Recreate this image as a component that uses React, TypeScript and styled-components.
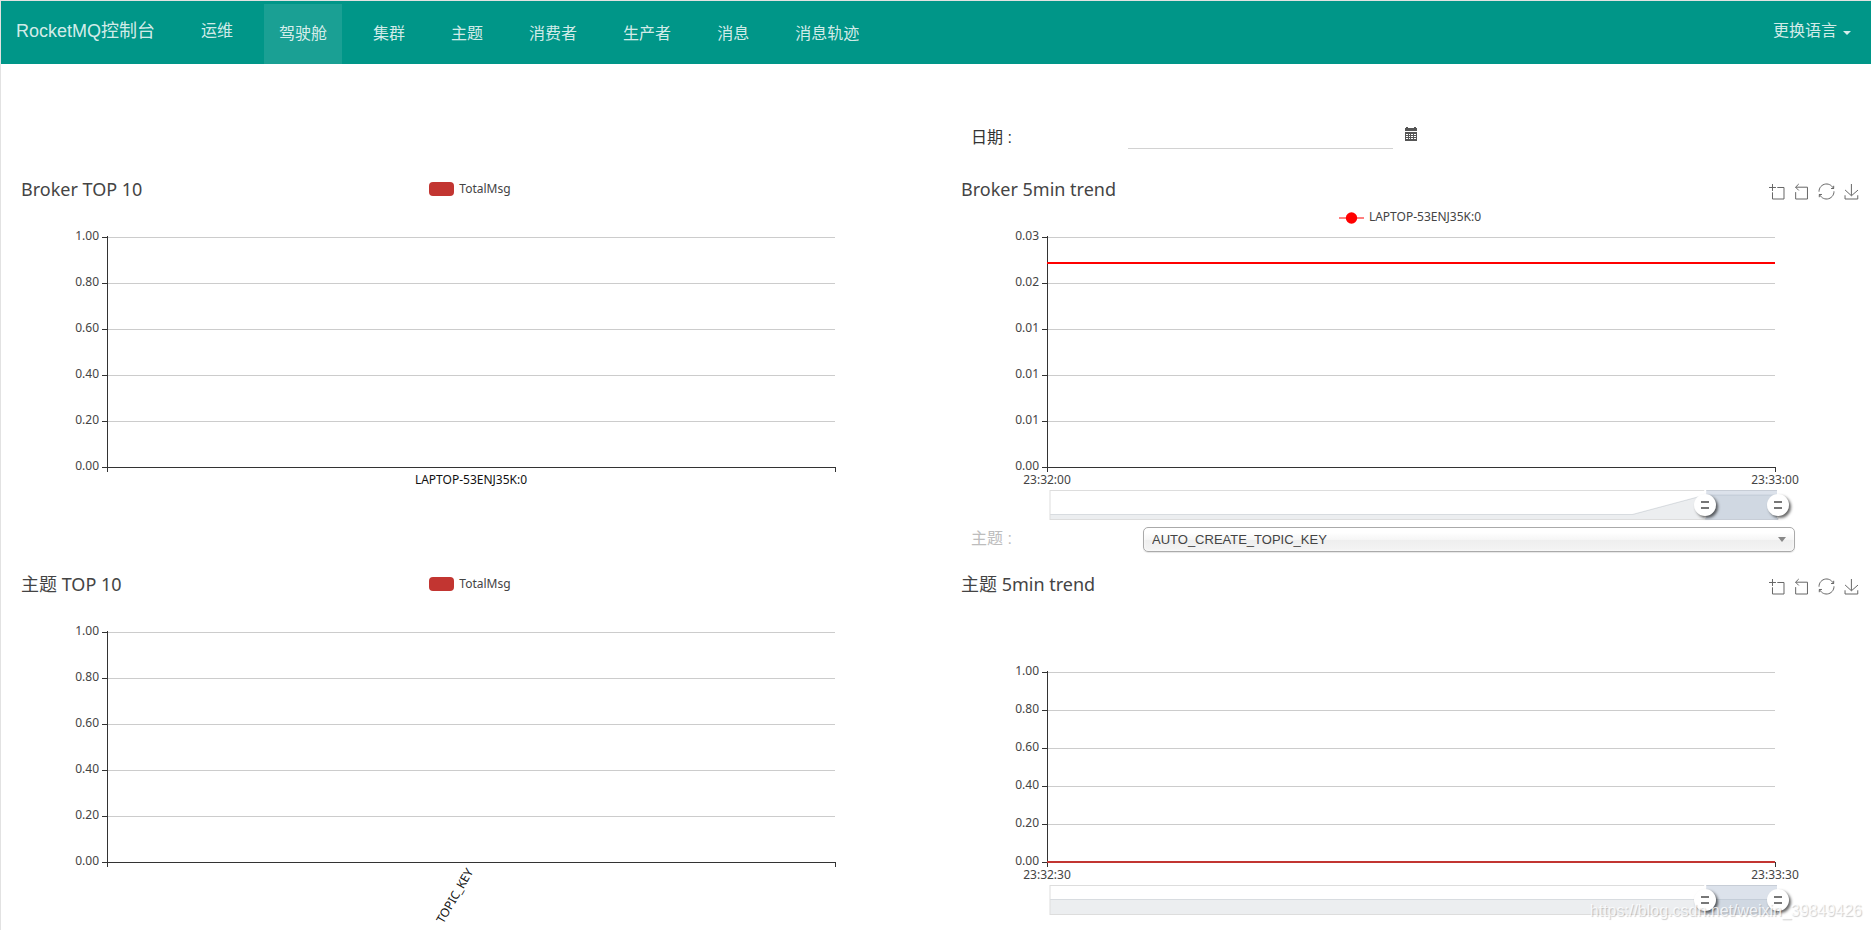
import React, { useState } from "react";
import styled, { createGlobalStyle } from "styled-components";

const UI_FONT = `"Liberation Sans", "Noto Sans CJK SC", sans-serif`;
const CHART_FONT = `"Noto Sans", "Noto Sans CJK SC", sans-serif`;

const GlobalStyle = createGlobalStyle`
  *, *::before, *::after { box-sizing: border-box; }
  body { margin: 0; background: #fff; color: #333; font-family: ${UI_FONT}; font-size: 16px; }
  button, input, select { font: inherit; }
`;

const Page = styled.div`
  position: relative;
  min-height: 100vh;
  border-top: 1px solid #e2e2e2;
  border-left: 1px solid #e2e2e2;
  overflow: hidden;
`;

/* ---------- navigation ---------- */

const Navbar = styled.nav`
  display: flex;
  align-items: flex-start;
  height: 63px;
  padding: 0 5px 0 0;
  background: #009688;
  line-height: 22px;
`;

const Brand = styled.a`
  padding: 19px 15px;
  margin-right: 16px;
  font-size: 18px;
  color: rgba(255, 255, 255, 0.84);
  text-decoration: none;
  white-space: nowrap;
`;

const OpsLink = styled.a`
  padding: 19px 15px;
  color: rgba(255, 255, 255, 0.84);
  text-decoration: none;
  white-space: nowrap;
`;

const NavList = styled.ul`
  display: flex;
  gap: 16px;
  flex: 1;
  margin: 3px 0 0 16px;
  padding: 0;
  list-style: none;
`;

const NavLink = styled.a<{ $active?: boolean }>`
  display: block;
  padding: 19px 15px;
  color: rgba(255, 255, 255, 0.84);
  background: ${(p) => (p.$active ? "rgba(255, 255, 255, 0.1)" : "transparent")};
  text-decoration: none;
  white-space: nowrap;
`;

const LanguageButton = styled.button`
  display: flex;
  align-items: center;
  gap: 6px;
  padding: 19px 15px;
  border: 0;
  background: none;
  color: rgba(255, 255, 255, 0.84);
  line-height: 22px;
  cursor: pointer;
`;

const Caret = styled.span`
  margin-top: 4px;
  border: 4px solid transparent;
  border-top-color: currentColor;
  border-bottom: 0;
`;

/* ---------- page grid ---------- */

const Dashboard = styled.main`
  padding: 0 5px 8px 15px;
`;

const Section = styled.section`
  display: grid;
  grid-template-columns: minmax(0, 1fr) minmax(0, 1fr);
  column-gap: 30px;
  align-items: end;
`;

const DateRow = styled.form`
  display: flex;
  height: 113px;
  padding: 62px 0 0 15px;
  line-height: 24px;
`;

const TopicRow = styled.form`
  display: flex;
  height: 45px;
  padding-left: 15px;
  line-height: 24px;
`;

const FieldLabel = styled.label<{ $muted?: boolean; $width: number }>`
  flex: 0 0 ${(p) => p.$width}px;
  color: ${(p) => (p.$muted ? "#bdbdbd" : "#333")};
`;

const DateInput = styled.input`
  width: 265px;
  height: 23px;
  padding: 0;
  border: 0;
  border-bottom: 1px solid #d2d2d2;
  background: none;
  outline: none;
`;

const CalendarButton = styled.button`
  display: flex;
  height: 16px;
  margin-left: 11px;
  padding: 1px 0;
  border: 0;
  background: none;
  color: #555;
  cursor: pointer;
`;

const SelectBox = styled.div`
  position: relative;
  flex: 1;
  height: 25px;
  margin-right: 71px;
`;

const TopicSelect = styled.select`
  display: block;
  width: 100%;
  height: 25px;
  padding: 0 24px 0 8px;
  border: 1px solid #aaa;
  border-radius: 5px;
  appearance: none;
  background: linear-gradient(#fff 20%, #f6f6f6 50%, #eee 52%, #f4f4f4 100%);
  box-shadow: inset 0 0 3px #fff, 0 1px 1px rgba(0, 0, 0, 0.1);
  color: #444;
  font-size: 13px;
`;

const SelectArrow = styled.span`
  position: absolute;
  top: 10px;
  right: 9px;
  border: 4px solid transparent;
  border-top: 5px solid #888;
  border-bottom: 0;
  pointer-events: none;
`;

/* ---------- charts ---------- */

const Panel = styled.article`
  height: 350px;
  font-family: ${CHART_FONT};
`;

const PanelHeader = styled.header`
  display: grid;
  grid-template-columns: 1fr auto 1fr;
  height: 50px;
  padding: 0 7px 0 5px;
`;

const Title = styled.h2`
  margin: 0;
  font-size: 18px;
  font-weight: 400;
  line-height: 24px;
  color: #444;
  white-space: nowrap;
`;

const Legend = styled.div<{ $low?: boolean }>`
  display: flex;
  align-items: center;
  align-self: start;
  gap: 5px;
  margin-top: ${(p) => (p.$low ? 32 : 4)}px;
  font-size: 12px;
  line-height: 16px;
  color: #444;
`;

const Swatch = styled.span`
  width: 25px;
  height: 14px;
  border-radius: 4px;
  background: #c23531;
`;

const Toolbox = styled.div`
  display: flex;
  justify-content: flex-end;
  gap: 10px;
  padding-top: 7px;
`;

const ToolButton = styled.button`
  display: flex;
  width: 15px;
  height: 15px;
  padding: 0;
  border: 0;
  background: none;
  cursor: pointer;
  svg { overflow: visible; }
`;

const Plot = styled.svg`
  display: block;
  width: 100%;
  overflow: visible;
  font-size: 12px;
`;

const ZoomTrack = styled.div`
  display: grid;
  width: 80%;
  height: 30px;
  margin-left: calc(10% + 3px);
  > * { grid-area: 1 / 1; }
`;

const ZoomHandle = styled.input`
  width: calc(100% + 22px);
  height: 30px;
  margin: 0 0 0 -11px;
  appearance: none;
  background: none;
  pointer-events: none;
  &::-webkit-slider-thumb {
    appearance: none;
    width: 22px;
    height: 22px;
    border-radius: 11px;
    pointer-events: auto;
    cursor: ew-resize;
    background:
      linear-gradient(#777, #777) 7px 7px / 8px 2px no-repeat,
      linear-gradient(#777, #777) 7px 13px / 8px 2px no-repeat,
      #fff;
    box-shadow: 2px 2px 3px rgba(0, 0, 0, 0.6);
  }
`;

const Watermark = styled.span`
  position: absolute;
  right: 9px;
  bottom: 8px;
  font-size: 16px;
  line-height: 22px;
  color: rgba(255, 255, 255, 0.8);
  text-shadow: 1px 1px 1px rgba(0, 0, 0, 0.2);
  pointer-events: none;
`;

const TOOLS = [
  { label: "区域缩放", box: "0 0 58 58", d: "M0,13.5h26.9 M13.5,26.9V0 M32.1,13.5H58V58H13.5 V32.1" },
  { label: "区域缩放还原", box: "4 1.4 56.7 56.7", d: "M22,1.4L9.9,13.5l12.3,12.3 M10.3,13.5H54.9v44.6 H10.3v-26" },
  {
    label: "还原",
    box: "2 2 56 56",
    d: "M47,18.9h9.8V8.7 M56.3,20.1 C52.1,9,40.5,0.6,26.8,2.1C12.6,3.7,1.6,16.2,2.1,30.6 M13,41.1H3.1v10.2 M3.7,39.9c4.2,11.1,15.8,19.5,29.5,18 c14.2-1.6,25.2-14.1,24.7-28.5",
  },
  {
    label: "保存为图片",
    box: "0.6 0 58 58",
    d: "M4.7,22.9L29.3,45.5L54.7,23.4M4.6,43.6L4.6,58L53.8,58L53.8,43.6M29.2,45.1L29.2,0",
  },
];

const ChartTools = () => (
  <Toolbox>
    {TOOLS.map((t) => (
      <ToolButton key={t.label} type="button" aria-label={t.label}>
        <svg width="15" height="15" viewBox={t.box} fill="none" stroke="#666">
          <path d={t.d} vectorEffect="non-scaling-stroke" />
        </svg>
      </ToolButton>
    ))}
  </Toolbox>
);

interface AxesProps {
  labels: string[];
  top: number;
  step: number;
}

/* The value axis runs upwards at 10% of the width; the plot ends at 90%. */
const Axes = ({ labels, top, step }: AxesProps) => {
  const bottom = top + step * (labels.length - 1);
  return (
    <g>
      <g shapeRendering="crispEdges">
        {labels.slice(0, -1).map((_, i) => (
          <line key={i} x1="10%" x2="90%" y1={top + i * step + 0.5} y2={top + i * step + 0.5} stroke="#ccc" />
        ))}
        <svg x="10%" overflow="visible">
          {labels.map((_, i) => (
            <rect key={i} x="-5" y={top + i * step} width="5" height="1" fill="#333" />
          ))}
          <rect x="0" y={top - 1} width="1" height={bottom - top + 6} fill="#333" />
        </svg>
        <svg x="90%" overflow="visible">
          <rect x="0" y={bottom} width="1" height="5" fill="#333" />
        </svg>
        <line x1="10%" x2="90%" y1={bottom + 0.5} y2={bottom + 0.5} stroke="#333" />
      </g>
      <svg x="10%" overflow="visible" fill="#444" textAnchor="end">
        {labels.map((label, i) => (
          <text key={i} x="-8" y={top + i * step + 3}>
            {label}
          </text>
        ))}
      </svg>
    </g>
  );
};

const UNIT_LABELS = ["1.00", "0.80", "0.60", "0.40", "0.20", "0.00"];

interface BarPanelProps {
  title: string;
  category: string;
  slanted?: boolean;
}

const BarPanel = ({ title, category, slanted }: BarPanelProps) => (
  <Panel>
    <PanelHeader>
      <Title>{title}</Title>
      <Legend>
        <Swatch />
        TotalMsg
      </Legend>
    </PanelHeader>
    <Plot height="300">
      <Axes labels={UNIT_LABELS} top={10} step={46} />
      <svg x="50%" y="248" overflow="visible" fill="#111">
        {slanted ? (
          <text transform="rotate(-60)" textAnchor="end" y="3">
            {category}
          </text>
        ) : (
          <text textAnchor="middle" y="9">
            {category}
          </text>
        )}
      </svg>
    </Plot>
  </Panel>
);

interface DataZoomProps {
  name: string;
  shadow: string;
}

const DataZoom = ({ name, shadow }: DataZoomProps) => {
  const [start, setStart] = useState(90);
  const [end, setEnd] = useState(100);
  return (
    <ZoomTrack>
      <svg width="100%" height="30" overflow="visible">
        <svg width="100%" height="30" viewBox="0 0 100 30" preserveAspectRatio="none">
          <path d={`M${shadow}L100,30L0,30Z`} fill="#2f4554" fillOpacity="0.09" />
          <path d={`M${shadow}`} fill="none" stroke="#2f4554" strokeOpacity="0.15" vectorEffect="non-scaling-stroke" />
        </svg>
        <rect width="100%" height="29" y="0.5" fill="none" stroke="#ddd" />
        <rect x={`${start}%`} width={`${end - start}%`} height="30" fill="#a7b7cc" fillOpacity="0.4" />
        {[start, end].map((v, i) => (
          <line key={i} x1={`${v}%`} x2={`${v}%`} y1="0" y2="28" stroke="#fff" strokeWidth="2" />
        ))}
      </svg>
      <ZoomHandle
        type="range"
        aria-label={`${name} start`}
        value={start}
        onChange={(e) => setStart(Math.min(Number(e.target.value), end))}
      />
      <ZoomHandle
        type="range"
        aria-label={`${name} end`}
        value={end}
        onChange={(e) => setEnd(Math.max(Number(e.target.value), start))}
      />
    </ZoomTrack>
  );
};

interface TrendPanelProps {
  title: string;
  series?: string;
  labels: string[];
  top: number;
  step: number;
  lineY: number;
  color: string;
  from: string;
  to: string;
  shadow: string;
}

const TrendPanel = (p: TrendPanelProps) => (
  <Panel>
    <PanelHeader>
      <Title>{p.title}</Title>
      <Legend $low>
        {p.series && (
          <>
            <svg width="25" height="14">
              <path d="M0,8H25" stroke={p.color} strokeWidth="2" strokeOpacity="0.5" />
              <circle cx="12.5" cy="8" r="5.7" fill={p.color} />
            </svg>
            {p.series}
          </>
        )}
      </Legend>
      <ChartTools />
    </PanelHeader>
    <Plot height="263">
      <Axes labels={p.labels} top={p.top} step={p.step} />
      <line x1="10%" x2="90%" y1={p.lineY} y2={p.lineY} stroke={p.color} strokeWidth="2" />
      <g fill="#444" textAnchor="middle">
        <text x="10%" y="257">
          {p.from}
        </text>
        <text x="90%" y="257">
          {p.to}
        </text>
      </g>
    </Plot>
    <DataZoom name={p.title} shadow={p.shadow} />
  </Panel>
);

const CalendarIcon = () => (
  <svg width="14" height="14" viewBox="0 0 14 14" fill="currentColor">
    <path d="M1 1H2V0H4V1H10V0H12V1H13V4H1Z" />
    <path
      fillRule="evenodd"
      d="M1 5H13V14H1ZM2 7V8H4V7ZM5 7V8H6V7ZM7 7V8H9V7ZM10 7V8H12V7ZM2 9V10H4V9ZM5 9V10H6V9ZM7 9V10H9V9ZM10 9V10H12V9ZM2 11V12H4V11ZM5 11V12H6V11ZM7 11V12H9V11ZM10 11V12H12V11Z"
    />
  </svg>
);

const NAV_ITEMS = ["驾驶舱", "集群", "主题", "消费者", "生产者", "消息", "消息轨迹"];

export default function App() {
  const [date, setDate] = useState("");
  return (
    <Page>
      <GlobalStyle />
      <Navbar>
        <Brand href="#">RocketMQ控制台</Brand>
        <OpsLink href="#ops">运维</OpsLink>
        <NavList>
          {NAV_ITEMS.map((item, i) => (
            <li key={item}>
              <NavLink href={`#${item}`} $active={i === 0}>
                {item}
              </NavLink>
            </li>
          ))}
        </NavList>
        <LanguageButton type="button">
          更换语言
          <Caret />
        </LanguageButton>
      </Navbar>
      <Dashboard>
        <Section>
          <BarPanel title="Broker TOP 10" category="LAPTOP-53ENJ35K:0" />
          <div>
            <DateRow>
              <FieldLabel htmlFor="date" $width={157}>
                日期 :
              </FieldLabel>
              <DateInput id="date" value={date} onChange={(e) => setDate(e.target.value)} />
              <CalendarButton type="button" aria-label="选择日期">
                <CalendarIcon />
              </CalendarButton>
            </DateRow>
            <TrendPanel
              title="Broker 5min trend"
              series="LAPTOP-53ENJ35K:0"
              labels={["0.03", "0.02", "0.01", "0.01", "0.01", "0.00"]}
              top={10}
              step={46}
              lineY={36}
              color="#ff0000"
              from="23:32:00"
              to="23:33:00"
              shadow="0,24.5L80,24.5L90,5L100,5"
            />
          </div>
        </Section>
        <Section>
          <BarPanel title="主题 TOP 10" category="TOPIC_KEY" slanted />
          <div>
            <TopicRow>
              <FieldLabel htmlFor="topic" $muted $width={172}>
                主题 :
              </FieldLabel>
              <SelectBox>
                <TopicSelect id="topic">
                  <option>AUTO_CREATE_TOPIC_KEY</option>
                </TopicSelect>
                <SelectArrow />
              </SelectBox>
            </TopicRow>
            <TrendPanel
              title="主题 5min trend"
              labels={UNIT_LABELS}
              top={50}
              step={38}
              lineY={240}
              color="#c23531"
              from="23:32:30"
              to="23:33:30"
              shadow="0,14.5L100,14.5"
            />
          </div>
        </Section>
      </Dashboard>
      <Watermark>https://blog.csdn.net/weixin_39849426</Watermark>
    </Page>
  );
}
